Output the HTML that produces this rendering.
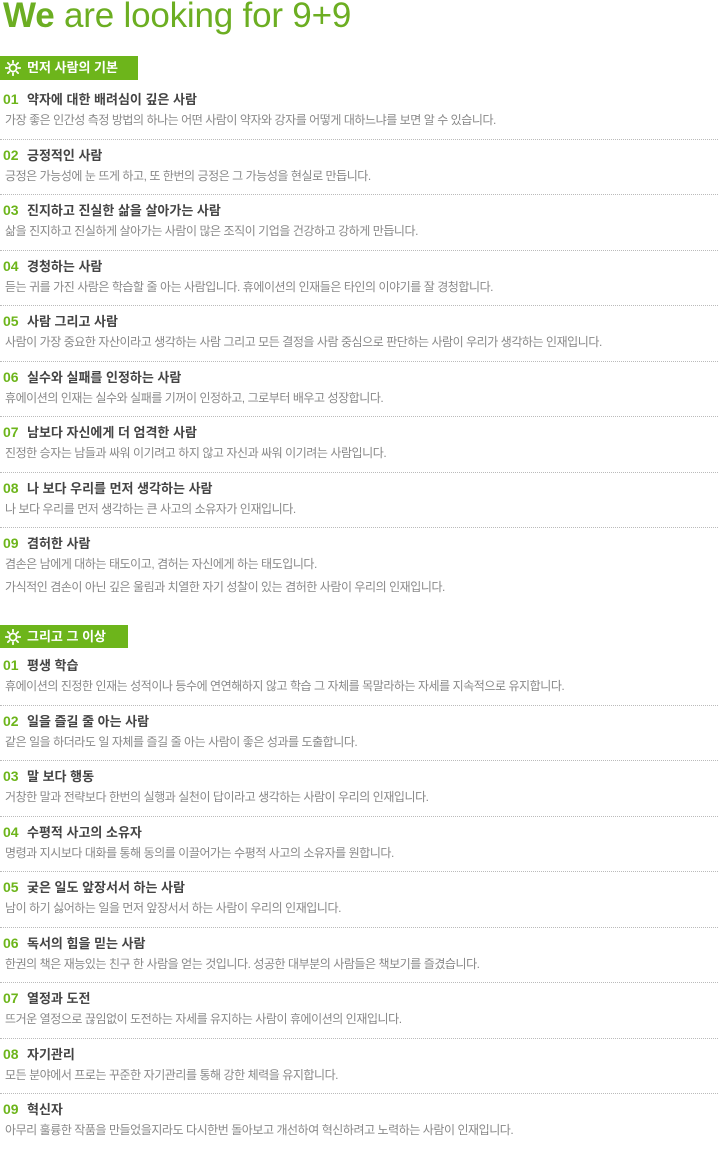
<!DOCTYPE html>
<html><head><meta charset="utf-8"><style>
body{margin:0;background:#fff;width:718px;height:1139px;overflow:hidden;font-family:"Liberation Sans","Noto Sans CJK KR",sans-serif}
h1{margin:0;position:absolute;left:3px;top:-4px;font-size:35px;font-weight:normal;color:#6cae22;letter-spacing:-0.2px;white-space:nowrap}
h1 b{font-weight:bold}
.ban{position:absolute;left:0;background:#6db51b;color:#fff;font-size:13px;font-weight:bold;box-sizing:border-box;padding-left:27px;white-space:nowrap}
.ban svg{position:absolute;left:5px;top:50%;margin-top:-8px}
.list{position:absolute;left:0;width:718px}
.it{padding:4px 0 8.5px 0;border-top:1px dotted #bbb}
.it:first-child{border-top:none}
.t{height:22px;line-height:22px;font-size:13px;font-weight:bold;color:#444;letter-spacing:0;white-space:nowrap}
.t span{display:inline-block;width:24px;padding-left:3px;color:#6db51b;font-size:14px;letter-spacing:0}
.d{height:20px;line-height:20px;font-size:12px;color:#888;padding-left:5px;letter-spacing:-0.45px;white-space:nowrap}
</style></head><body>
<h1><b>We</b> are looking for 9+9</h1>

<div class="ban" style="top:56px;width:138px;height:24px;line-height:24px">
<svg width="16" height="16" viewBox="0 0 16 16"><circle cx="8" cy="8" r="3.6" fill="none" stroke="#fff" stroke-width="1.8"/><g stroke="#fff" stroke-width="1.8" stroke-linecap="round"><path d="M8 0.8V2.6M8 13.4V15.2M0.8 8H2.6M13.4 8H15.2M2.9 2.9L4.2 4.2M11.8 11.8L13.1 13.1M2.9 13.1L4.2 11.8M11.8 4.2L13.1 2.9"/></g></svg>먼저 사람의 기본</div>

<div class="list" style="top:84px">
<div class="it"><div class="t"><span>01</span>약자에 대한 배려심이 깊은 사람</div><div class="d">가장 좋은 인간성 측정 방법의 하나는 어떤 사람이 약자와 강자를 어떻게 대하느냐를 보면 알 수 있습니다.</div></div>
<div class="it"><div class="t"><span>02</span>긍정적인 사람</div><div class="d">긍정은 가능성에 눈 뜨게 하고, 또 한번의 긍정은 그 가능성을 현실로 만듭니다.</div></div>
<div class="it"><div class="t"><span>03</span>진지하고 진실한 삶을 살아가는 사람</div><div class="d">삶을 진지하고 진실하게 살아가는 사람이 많은 조직이 기업을 건강하고 강하게 만듭니다.</div></div>
<div class="it"><div class="t"><span>04</span>경청하는 사람</div><div class="d">듣는 귀를 가진 사람은 학습할 줄 아는 사람입니다. 휴에이션의 인재들은 타인의 이야기를 잘 경청합니다.</div></div>
<div class="it"><div class="t"><span>05</span>사람 그리고 사람</div><div class="d">사람이 가장 중요한 자산이라고 생각하는 사람 그리고 모든 결정을 사람 중심으로 판단하는 사람이 우리가 생각하는 인재입니다.</div></div>
<div class="it"><div class="t"><span>06</span>실수와 실패를 인정하는 사람</div><div class="d">휴에이션의 인재는 실수와 실패를 기꺼이 인정하고, 그로부터 배우고 성장합니다.</div></div>
<div class="it"><div class="t"><span>07</span>남보다 자신에게 더 엄격한 사람</div><div class="d">진정한 승자는 남들과 싸워 이기려고 하지 않고 자신과 싸워 이기려는 사람입니다.</div></div>
<div class="it"><div class="t"><span>08</span>나 보다 우리를 먼저 생각하는 사람</div><div class="d">나 보다 우리를 먼저 생각하는 큰 사고의 소유자가 인재입니다.</div></div>
<div class="it"><div class="t"><span>09</span>겸허한 사람</div><div class="d">겸손은 남에게 대하는 태도이고, 겸허는 자신에게 하는 태도입니다.</div><div class="d" style="height:23px;line-height:26px">가식적인 겸손이 아닌 깊은 울림과 치열한 자기 성찰이 있는 겸허한 사람이 우리의 인재입니다.</div></div>
</div>

<div class="ban" style="top:625px;width:128px;height:23px;line-height:23px">
<svg width="16" height="16" viewBox="0 0 16 16"><circle cx="8" cy="8" r="3.6" fill="none" stroke="#fff" stroke-width="1.8"/><g stroke="#fff" stroke-width="1.8" stroke-linecap="round"><path d="M8 0.8V2.6M8 13.4V15.2M0.8 8H2.6M13.4 8H15.2M2.9 2.9L4.2 4.2M11.8 11.8L13.1 13.1M2.9 13.1L4.2 11.8M11.8 4.2L13.1 2.9"/></g></svg>그리고 그 이상</div>

<div class="list" style="top:650px">
<div class="it"><div class="t"><span>01</span>평생 학습</div><div class="d">휴에이션의 진정한 인재는 성적이나 등수에 연연해하지 않고 학습 그 자체를 목말라하는 자세를 지속적으로 유지합니다.</div></div>
<div class="it"><div class="t"><span>02</span>일을 즐길 줄 아는 사람</div><div class="d">같은 일을 하더라도 일 자체를 즐길 줄 아는 사람이 좋은 성과를 도출합니다.</div></div>
<div class="it"><div class="t"><span>03</span>말 보다 행동</div><div class="d">거창한 말과 전략보다 한번의 실행과 실천이 답이라고 생각하는 사람이 우리의 인재입니다.</div></div>
<div class="it"><div class="t"><span>04</span>수평적 사고의 소유자</div><div class="d">명령과 지시보다 대화를 통해 동의를 이끌어가는 수평적 사고의 소유자를 원합니다.</div></div>
<div class="it"><div class="t"><span>05</span>궂은 일도 앞장서서 하는 사람</div><div class="d">남이 하기 싫어하는 일을 먼저 앞장서서 하는 사람이 우리의 인재입니다.</div></div>
<div class="it"><div class="t"><span>06</span>독서의 힘을 믿는 사람</div><div class="d">한권의 책은 재능있는 친구 한 사람을 얻는 것입니다. 성공한 대부분의 사람들은 책보기를 즐겼습니다.</div></div>
<div class="it"><div class="t"><span>07</span>열정과 도전</div><div class="d">뜨거운 열정으로 끊임없이 도전하는 자세를 유지하는 사람이 휴에이션의 인재입니다.</div></div>
<div class="it"><div class="t"><span>08</span>자기관리</div><div class="d">모든 분야에서 프로는 꾸준한 자기관리를 통해 강한 체력을 유지합니다.</div></div>
<div class="it"><div class="t"><span>09</span>혁신자</div><div class="d">아무리 훌륭한 작품을 만들었을지라도 다시한번 돌아보고 개선하여 혁신하려고 노력하는 사람이 인재입니다.</div></div>
</div>
</body></html>
